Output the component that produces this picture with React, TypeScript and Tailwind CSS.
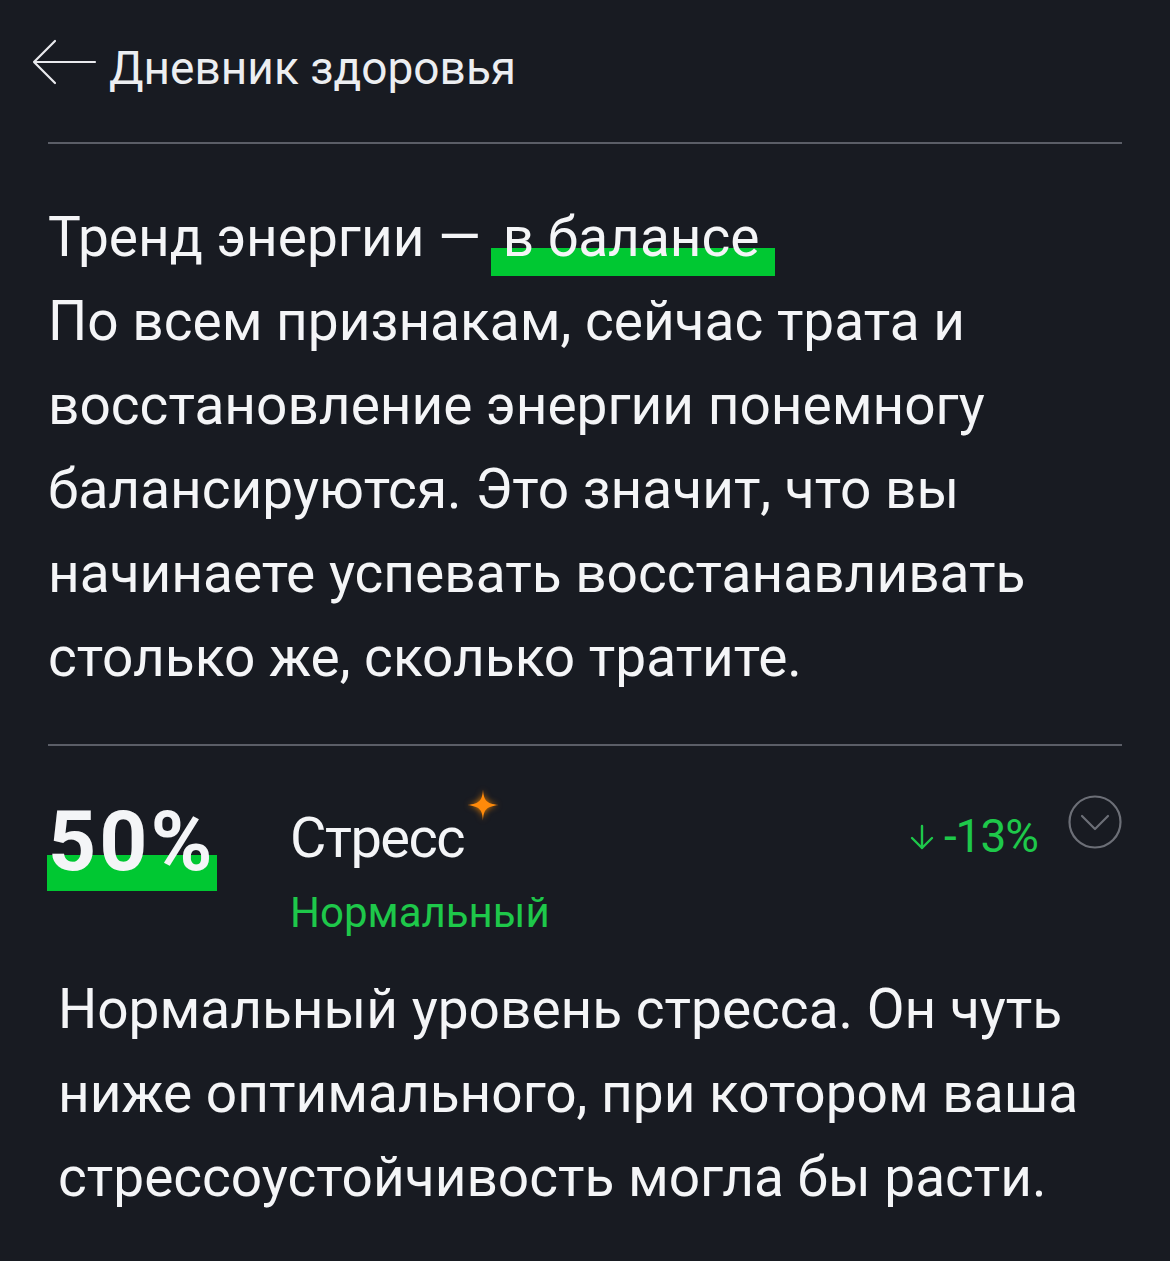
import React from 'react';

const GREEN = '#00c832';
const TEXT_GREEN = '#1ec84a';

const BackArrow: React.FC = () => (
  <svg width="66" height="46" viewBox="0 0 66 46" fill="none" stroke="#e9eaee" strokeWidth={2.2} strokeLinecap="round" strokeLinejoin="round">
    <path d="M64 23H3M24 2L3 23l21 21" />
  </svg>
);

const Sparkle: React.FC = () => (
  <svg width="34" height="34" viewBox="0 0 24 24" className="drop-shadow-[0_0_3px_rgba(255,140,0,0.9)]">
    <path
      d="M12 1C12.6 8.6 14 10.8 23 12C14 13.2 12.6 15.4 12 23C11.4 15.4 10 13.2 1 12C10 10.8 11.4 8.6 12 1Z"
      fill="#ff8a0a"
    />
  </svg>
);

const DownArrow: React.FC = () => (
  <svg width="24" height="26" viewBox="0 0 24 26" fill="none" stroke={TEXT_GREEN} strokeWidth={2.4} strokeLinecap="round" strokeLinejoin="round">
    <path d="M12 2v22M2 14l10 10 10-10" />
  </svg>
);

const ChevronCircle: React.FC = () => (
  <svg width="54" height="54" viewBox="0 0 54 54" fill="none" stroke="#6c6f77" strokeWidth={2.2} strokeLinecap="round" strokeLinejoin="round">
    <circle cx="27" cy="27" r="25.5" />
    <path d="M14 21l13 13 13-13" />
  </svg>
);

export default function App() {
  return (
    <div
      className="min-h-screen bg-[#181b22] text-[#f4f5f7]"
      style={{ fontFamily: 'Roboto, "Noto Sans", sans-serif' }}
    >
      {/* Top bar */}
      <header className="flex items-center h-[142px] pl-[31px] pb-[6px]">
        <span className="mb-[12px]">
          <BackArrow />
        </span>
        <h1 className="ml-[12px] text-[46px] leading-none text-[#eceef1]">Дневник здоровья</h1>
      </header>

      <div className="mx-12 h-[2px] bg-[#5b5e67]" />

      {/* Energy trend */}
      <section className="px-12 pt-[51px] pb-[45px] text-[55px] leading-[84px]">
        <p>
          Тренд энергии <span className="tracking-[4px]">—</span>{' '}
          <span className="relative inline-block ml-[4px]">
            <span className="absolute -left-3 -right-[15px] top-[53px] h-[28px]" style={{ background: GREEN }} />
            <span className="relative">в балансе</span>
          </span>
        </p>
        <p>
          По всем признакам, сейчас трата и восстановление энергии понемногу балансируются. Это значит, что вы
          начинаете успевать восстанавливать столько же, сколько тратите.
        </p>
      </section>

      <div className="mx-12 h-[2px] bg-[#5b5e67]" />

      {/* Stress metric */}
      <section className="pt-[54px] px-12">
        <div className="flex items-start">
          <div className="w-[242px] shrink-0">
            <div className="relative inline-block">
              <span className="absolute -left-px right-[-2px] top-[55px] h-[36px]" style={{ background: GREEN }} />
              <span className="relative block text-[84px] font-bold leading-none tracking-[3px]">50%</span>
            </div>
          </div>

          <div className="flex-1">
            <div className="mt-[8px] text-[56px] leading-[60px] tracking-[-1.5px]">
              <span className="relative">
                Стресс
                <span className="absolute left-full ml-[2px] -top-[17px]">
                  <Sparkle />
                </span>
              </span>
            </div>
            <div className="mt-[20px] text-[42px] leading-[50px]" style={{ color: TEXT_GREEN }}>
              Нормальный
            </div>
          </div>

          <div className="mt-[13px] flex items-center text-[46px] leading-none tracking-[-1px]" style={{ color: TEXT_GREEN }}>
            <span className="mr-[10px] mt-[2px]">
              <DownArrow />
            </span>
            -13%
          </div>
          <div className="ml-[30px] -mt-[5px]">
            <ChevronCircle />
          </div>
        </div>

        <p className="mt-[29px] pl-[10px] pr-4 text-[55px] leading-[84px]">
          Нормальный уровень стресса. Он чуть ниже оптимального, при котором ваша стрессоустойчивость могла бы
          расти.
        </p>
      </section>
    </div>
  );
}
